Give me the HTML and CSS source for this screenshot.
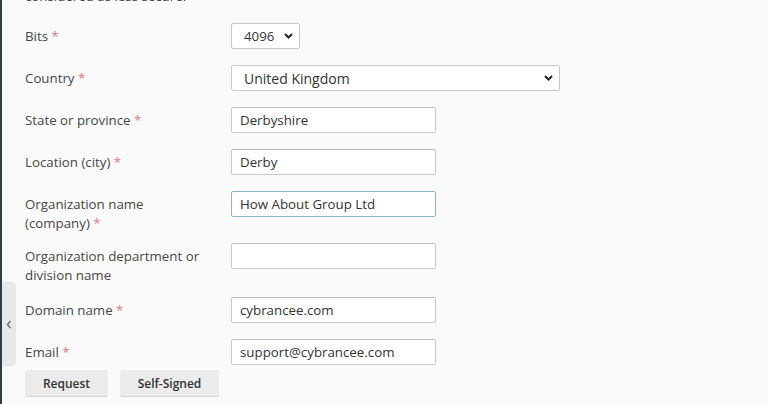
FILE: index.html
```html
<!DOCTYPE html>
<html lang="en">
<head>
<meta charset="utf-8">
<title>Certificate request</title>
<link rel="stylesheet" href="styles.css">
</head>
<body>
<div class="edge"></div>
<div class="collapse-tab">
  <svg width="6" height="9" viewBox="0 0 6 9"><path d="M4.5 1 L1.5 4.5 L4.5 8" fill="none" stroke="#666" stroke-width="1.3"/></svg>
</div>
<main class="page">
  <p class="note">considered as less secure.</p>
  <form class="form">
    <div class="row">
      <label class="lbl">Bits <span class="req">*</span></label>
      <div class="field">
        <span class="sel-wrap sel-bits">
          <select class="sel"><option>4096</option></select>
          <svg class="chev" width="9" height="6" viewBox="0 0 9 6"><path d="M1 1 L4.5 4.5 L8 1" fill="none" stroke="#222" stroke-width="2"/></svg>
        </span>
      </div>
    </div>
    <div class="row">
      <label class="lbl">Country <span class="req">*</span></label>
      <div class="field">
        <span class="sel-wrap sel-country">
          <select class="sel"><option>United Kingdom</option></select>
          <svg class="chev" width="9" height="6" viewBox="0 0 9 6"><path d="M1 1 L4.5 4.5 L8 1" fill="none" stroke="#222" stroke-width="2"/></svg>
        </span>
      </div>
    </div>
    <div class="row">
      <label class="lbl">State or province <span class="req">*</span></label>
      <div class="field"><input class="inp" type="text" value="Derbyshire"></div>
    </div>
    <div class="row">
      <label class="lbl">Location (city) <span class="req">*</span></label>
      <div class="field"><input class="inp" type="text" value="Derby"></div>
    </div>
    <div class="row">
      <label class="lbl">Organization name<br>(company) <span class="req">*</span></label>
      <div class="field"><input class="inp focus" type="text" value="How About Group Ltd"></div>
    </div>
    <div class="row row-tall">
      <label class="lbl">Organization department or<br>division name</label>
      <div class="field"><input class="inp" type="text" value=""></div>
    </div>
    <div class="row">
      <label class="lbl">Domain name <span class="req">*</span></label>
      <div class="field"><input class="inp" type="text" value="cybrancee.com"></div>
    </div>
    <div class="row row-last">
      <label class="lbl">Email <span class="req">*</span></label>
      <div class="field"><input class="inp" type="text" value="support@cybrancee.com"></div>
    </div>
    <div class="buttons">
      <button type="button" class="btn btn-request">Request</button>
      <button type="button" class="btn btn-self">Self-Signed</button>
    </div>
  </form>
</main>
</body>
</html>
```
FILE: styles.css
```css
html, body {
  margin: 0;
  padding: 0;
  background: #fafafa;
  overflow: hidden;
}
body {
  font-family: "Open Sans", "Noto Sans", "Liberation Sans", sans-serif;
  font-size: 13.3px;
  color: #474747;
  height: 404px;
}
.edge {
  position: fixed;
  left: 0;
  top: 0;
  width: 2px;
  height: 100%;
  background: #2f3a4b;
}
.collapse-tab {
  position: fixed;
  left: 2px;
  top: 282px;
  width: 14px;
  height: 84px;
  background: #e8e8e8;
  border-radius: 0 4px 4px 0;
  display: flex;
  align-items: center;
  justify-content: center;
}
.page {
  padding: 0 0 0 25px;
}
.note {
  margin: -13px 0 17px 0;
  line-height: 19px;
}
.form {
  margin: 0;
}
.row {
  display: flex;
  align-items: flex-start;
  margin-bottom: 10px;
}
.row-tall {
  margin-bottom: 12px;
}
.row-last {
  margin-bottom: 0;
}
.lbl {
  width: 206px;
  flex: none;
  padding-top: 4px;
  line-height: 19px;
}
.req {
  color: #e0787a;
}
.field {
  padding-bottom: 6px;
}
.row-last .field {
  padding-bottom: 5px;
}
.inp {
  box-sizing: border-box;
  width: 205px;
  height: 26px;
  margin: 0;
  padding: 0 8px;
  border: 1px solid #c8c8c8;
  border-top-color: #bdbdbd;
  border-radius: 2px;
  background: #fff;
  font-family: inherit;
  font-size: 13.3px;
  color: #333;
  outline: none;
  display: block;
}
.inp.focus {
  border-color: #8fb4d3;
}
.sel-wrap {
  position: relative;
  display: block;
}
.sel {
  box-sizing: border-box;
  height: 26px;
  margin: 0;
  padding: 0 0 0 12px;
  border: 1px solid #c8c8c8;
  border-radius: 2px;
  background: #fff;
  font-family: inherit;
  font-size: 13.3px;
  color: #333;
  appearance: none;
  -webkit-appearance: none;
  outline: none;
  display: block;
}
.sel-bits .sel {
  width: 69px;
}
.sel-country .sel {
  width: 329px;
  font-size: 14px;
}
.chev {
  position: absolute;
  top: 10px;
  pointer-events: none;
}
.sel-bits .chev {
  left: 53px;
}
.sel-country .chev {
  left: 313px;
}
.buttons {
  display: flex;
  gap: 12px;
}
.btn {
  height: 26px;
  margin: 0;
  padding: 0;
  border: none;
  border-radius: 2px;
  background: #ebebeb;
  box-shadow: 0 1px 0 #d2d2d2;
  font-family: inherit;
  font-size: 12px;
  font-weight: 600;
  color: #333;
}
.btn-request {
  width: 83px;
}
.btn-self {
  width: 99px;
}
```
